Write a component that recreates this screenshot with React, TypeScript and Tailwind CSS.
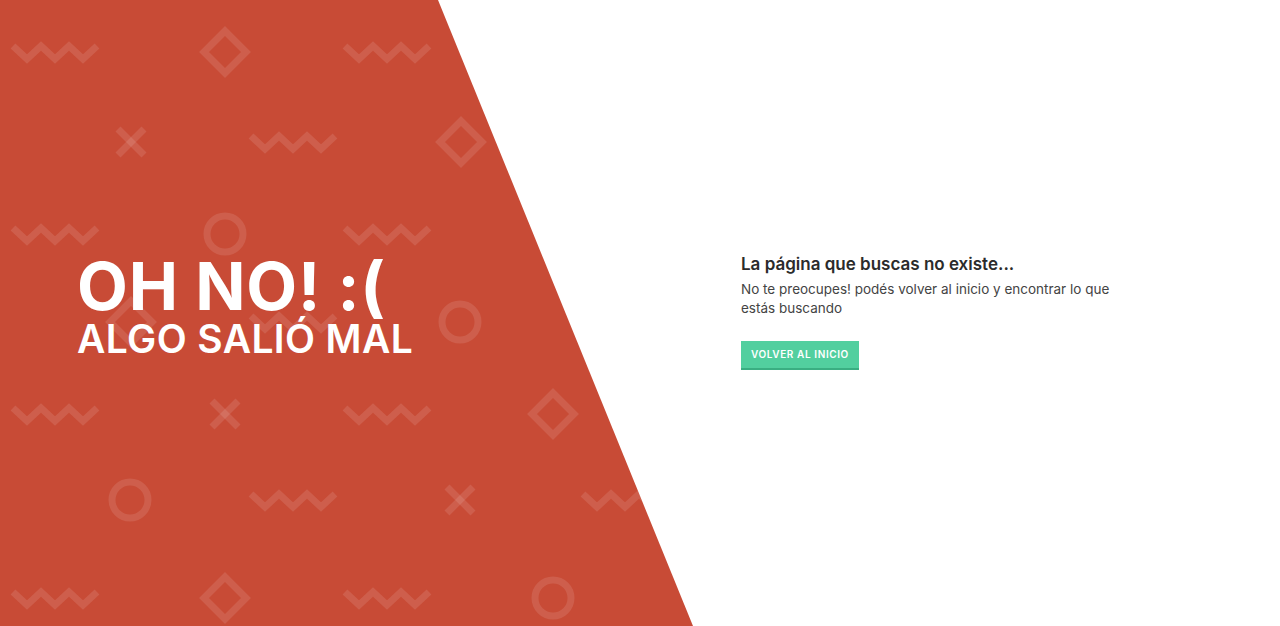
import React from "react";

type Shape = { kind: "zig" | "diamond" | "x" | "circle"; x: number; y: number };

// pattern behind the red panel, centre points
const shapes: Shape[] = [
  { kind: "zig", x: 55, y: 52 },
  { kind: "diamond", x: 225, y: 52 },
  { kind: "zig", x: 387, y: 52 },
  { kind: "diamond", x: 553, y: 52 },
  { kind: "x", x: 131, y: 142 },
  { kind: "zig", x: 293, y: 142 },
  { kind: "diamond", x: 461, y: 142 },
  { kind: "zig", x: 625, y: 142 },
  { kind: "zig", x: 55, y: 234 },
  { kind: "circle", x: 225, y: 234 },
  { kind: "zig", x: 387, y: 234 },
  { kind: "x", x: 553, y: 234 },
  { kind: "diamond", x: 131, y: 322 },
  { kind: "zig", x: 293, y: 322 },
  { kind: "circle", x: 460, y: 322 },
  { kind: "zig", x: 625, y: 322 },
  { kind: "zig", x: 55, y: 414 },
  { kind: "x", x: 225, y: 414 },
  { kind: "zig", x: 387, y: 414 },
  { kind: "diamond", x: 553, y: 414 },
  { kind: "circle", x: 130, y: 500 },
  { kind: "zig", x: 293, y: 500 },
  { kind: "x", x: 460, y: 500 },
  { kind: "zig", x: 625, y: 500 },
  { kind: "zig", x: 55, y: 598 },
  { kind: "diamond", x: 225, y: 598 },
  { kind: "zig", x: 387, y: 598 },
  { kind: "circle", x: 553, y: 598 },
];

function PatternShape({ kind, x, y }: Shape) {
  switch (kind) {
    case "zig":
      return (
        <polyline
          points={`${x - 42},${y - 6} ${x - 28},${y + 7} ${x - 14},${y - 6} ${x},${y + 7} ${x + 14},${y - 6} ${x + 28},${y + 7} ${x + 42},${y - 6}`}
          strokeLinejoin="miter"
        />
      );
    case "diamond":
      return <polygon points={`${x},${y - 21} ${x + 21},${y} ${x},${y + 21} ${x - 21},${y}`} />;
    case "x":
      return (
        <>
          <line x1={x - 13} y1={y - 13} x2={x + 13} y2={y + 13} />
          <line x1={x + 13} y1={y - 13} x2={x - 13} y2={y + 13} />
        </>
      );
    case "circle":
      return <circle cx={x} cy={y} r={18} />;
  }
}

export default function App() {
  return (
    <div className="flex h-screen w-full overflow-hidden bg-white font-['Inter','Noto_Sans',sans-serif]">
      {/* Red side */}
      <div className="relative flex w-[693px] shrink-0 items-center bg-[#c84b36] pl-[77px] [clip-path:polygon(0_0,438px_0,100%_100%,0_100%)]">
        <svg
          className="absolute inset-0 h-full w-full"
          viewBox="0 0 693 626"
          fill="none"
          stroke="rgba(255,255,255,0.11)"
          strokeWidth={7}
        >
          {shapes.map((s, i) => (
            <PatternShape key={i} {...s} />
          ))}
        </svg>
        <div className="relative -mt-[14px] text-white">
          <h1 className="text-[66px] font-bold leading-[66px] tracking-[0.012em]">OH NO! :(</h1>
          <h2 className="text-[39px] font-semibold leading-[40px] tracking-[0.01em]">ALGO SALIÓ MAL</h2>
        </div>
      </div>

      {/* Message */}
      <div className="flex flex-1 items-center pl-[48px]">
        <div className="-mt-[4px] max-w-[380px]">
          <h3 className="text-[17px] font-semibold text-[#2b2b2b]">La página que buscas no existe...</h3>
          <p className="mt-[3px] text-[13.5px] leading-[19px] text-[#444]">
            No te preocupes! podés volver al inicio y encontrar lo que estás buscando
          </p>
          <button className="mt-[23px] h-[29px] border-b-2 border-[#3aae82] bg-[#52cf9f] px-[10px] text-[10px] font-semibold tracking-[0.06em] text-white">
            VOLVER AL INICIO
          </button>
        </div>
      </div>
    </div>
  );
}
